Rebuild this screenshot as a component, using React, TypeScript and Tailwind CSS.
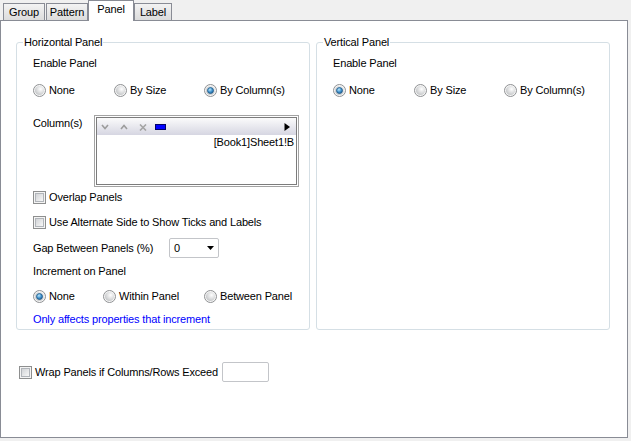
import React, { useId } from "react";

function Radio({ checked }: { checked?: boolean }) {
  const id = useId().replace(/:/g, "");
  return (
    <svg width="13" height="13" viewBox="0 0 13 13" className="shrink-0">
      <defs>
        <radialGradient id={`g${id}`} cx="0.62" cy="0.35" r="0.7">
          <stop offset="0" stopColor="#ffffff" />
          <stop offset="1" stopColor="#c2c4c6" />
        </radialGradient>
        <radialGradient id={`d${id}`} cx="0.4" cy="0.35" r="0.75">
          <stop offset="0" stopColor="#b9e6fb" />
          <stop offset="0.55" stopColor="#3d8fcb" />
          <stop offset="1" stopColor="#1a5589" />
        </radialGradient>
      </defs>
      <circle cx="6.5" cy="6.5" r="6" fill="#f6f6f6" stroke="#8f9193" strokeWidth="1" />
      <circle cx="6.5" cy="6.5" r="4.6" fill={`url(#g${id})`} />
      {checked && <circle cx="6.5" cy="6.5" r="3" fill={`url(#d${id})`} stroke="#225a87" strokeWidth="0.8" />}
    </svg>
  );
}

function Check() {
  return (
    <div className="w-[13px] h-[13px] shrink-0 border border-[#8e8f8f] bg-[#f4f4f4] p-px">
      <div className="w-full h-full border border-[#b1b5ba] bg-gradient-to-br from-[#d2d4d7] to-[#f7f7f7]" />
    </div>
  );
}

function RadioItem({ label, checked, w }: { label: string; checked?: boolean; w: string }) {
  return (
    <div className={`flex items-center gap-[3px] whitespace-nowrap ${w}`}>
      <Radio checked={checked} />
      <span>{label}</span>
    </div>
  );
}

function Tab({ label, selected, w }: { label: string; selected?: boolean; w: string }) {
  if (selected) {
    return (
      <div className={`relative z-10 h-[21px] ${w} border-l border-t border-r border-[#898c95] bg-white text-center pt-[2px]`}>
        {label}
      </div>
    );
  }
  return (
    <div className={`h-[18px] ${w} border border-[#898c95] bg-gradient-to-b from-[#f3f3f3] to-[#dcdcdc] text-center pt-[2px]`}>
      {label}
    </div>
  );
}

export default function App() {
  return (
    <div className="w-[631px] h-[441px] bg-[#f0f0f0] text-[11px] leading-[13px] tracking-[-0.15px] text-black font-['Liberation_Sans',Arial,sans-serif] overflow-hidden">
      <div className="flex items-end h-[21px] pl-[3px]">
        <Tab label="Group" w="w-[42px]" />
        <div className="ml-px">
          <Tab label="Pattern" w="w-[42px]" />
        </div>
        <Tab label="Panel" selected w="w-[46px]" />
        <Tab label="Label" w="w-[38px]" />
      </div>
      <div className="-mt-px h-[418px] w-[628px] border border-[#898c95] bg-white">
        <div className="flex gap-[6px] pl-[15px] pt-[15px]">
          {/* Horizontal Panel */}
          <fieldset className="w-[294px] border border-[#d5dfe5] rounded-[3px]">
            <legend className="ml-[6px] px-px leading-[13px]">Horizontal Panel</legend>
            <div className="pl-[16px] flex flex-col">
              <div className="h-[28px] flex items-center">Enable Panel</div>
              <div className="h-[27px] flex items-center">
                <RadioItem label="None" w="w-[81px]" />
                <RadioItem label="By Size" w="w-[90px]" />
                <RadioItem label="By Column(s)" checked w="w-[100px]" />
              </div>
              <div className="mt-[11px] h-[72px] flex items-start">
                <div className="w-[61px] pt-[2px]">Column(s)</div>
                <div className="w-[205px] h-[72px] border border-[#a3a3a3] bg-white p-px">
                  <div className="w-full h-full border border-[#7c7c7c] flex flex-col">
                    <div className="h-[17px] bg-gradient-to-b from-[#fbfbfb] to-[#d6d6e2] flex items-center pl-[4px] pr-[6px]">
                      <svg width="8" height="6" viewBox="0 0 8 6" className="mt-px">
                        <path d="M1 1 L4 4.5 L7 1" stroke="#9c9c9c" strokeWidth="1.6" fill="none" />
                      </svg>
                      <svg width="8" height="6" viewBox="0 0 8 6" className="ml-[11px] mt-px">
                        <path d="M1 5 L4 1.5 L7 5" stroke="#9c9c9c" strokeWidth="1.6" fill="none" />
                      </svg>
                      <svg width="8" height="7" viewBox="0 0 8 7" className="ml-[11px] mt-px">
                        <path d="M1 0.5 L7 6.5 M7 0.5 L1 6.5" stroke="#a4a4a4" strokeWidth="1.6" fill="none" />
                      </svg>
                      <div className="ml-[8px] mt-px w-[11px] h-[6px] bg-[#0000ff] border border-[#000066]" />
                      <div className="flex-1" />
                      <svg width="6" height="8" viewBox="0 0 6 8" className="mt-px">
                        <path d="M0.5 0 L6 4 L0.5 8 Z" fill="#000" />
                      </svg>
                    </div>
                    <div className="text-right pr-[2px] pt-px">[Book1]Sheet1!B</div>
                  </div>
                </div>
              </div>
              <div className="h-[20px] flex items-center gap-[3px]">
                <Check />
                <span>Overlap Panels</span>
              </div>
              <div className="mt-[5px] h-[20px] flex items-center gap-[3px]">
                <Check />
                <span className="whitespace-nowrap">Use Alternate Side to Show Ticks and Labels</span>
              </div>
              <div className="mt-[6px] h-[20px] flex items-center">
                <span className="w-[136px] whitespace-nowrap">Gap Between Panels (%)</span>
                <div className="w-[50px] h-[20px] border border-[#c3c5c9] rounded-[2px] flex items-center pl-[4px] pr-[4px] bg-white">
                  <span className="flex-1">0</span>
                  <svg width="7" height="4" viewBox="0 0 7 4">
                    <path d="M0 0 L7 0 L3.5 4 Z" fill="#000" />
                  </svg>
                </div>
              </div>
              <div className="mt-[3px] h-[20px] flex items-center">Increment on Panel</div>
              <div className="mt-[5px] h-[21px] flex items-center">
                <RadioItem label="None" checked w="w-[70px]" />
                <RadioItem label="Within Panel" w="w-[101px]" />
                <RadioItem label="Between Panel" w="w-[100px]" />
              </div>
              <div className="mt-[2px] h-[20px] flex items-center text-[#0000ff] whitespace-nowrap">
                Only affects properties that increment
              </div>
            </div>
          </fieldset>

          {/* Vertical Panel */}
          <fieldset className="w-[294px] border border-[#d5dfe5] rounded-[3px]">
            <legend className="ml-[6px] px-px leading-[13px]">Vertical Panel</legend>
            <div className="pl-[16px] flex flex-col">
              <div className="h-[28px] flex items-center">Enable Panel</div>
              <div className="h-[27px] flex items-center">
                <RadioItem label="None" checked w="w-[81px]" />
                <RadioItem label="By Size" w="w-[90px]" />
                <RadioItem label="By Column(s)" w="w-[100px]" />
              </div>
            </div>
          </fieldset>
        </div>

        <div className="mt-[32px] ml-[18px] h-[20px] flex items-center">
          <Check />
          <span className="ml-[3px] w-[187px] whitespace-nowrap">Wrap Panels if Columns/Rows Exceed</span>
          <div className="w-[47px] h-[20px] border border-[#c3c5c9] rounded-[2px] bg-white" />
        </div>
      </div>
    </div>
  );
}
